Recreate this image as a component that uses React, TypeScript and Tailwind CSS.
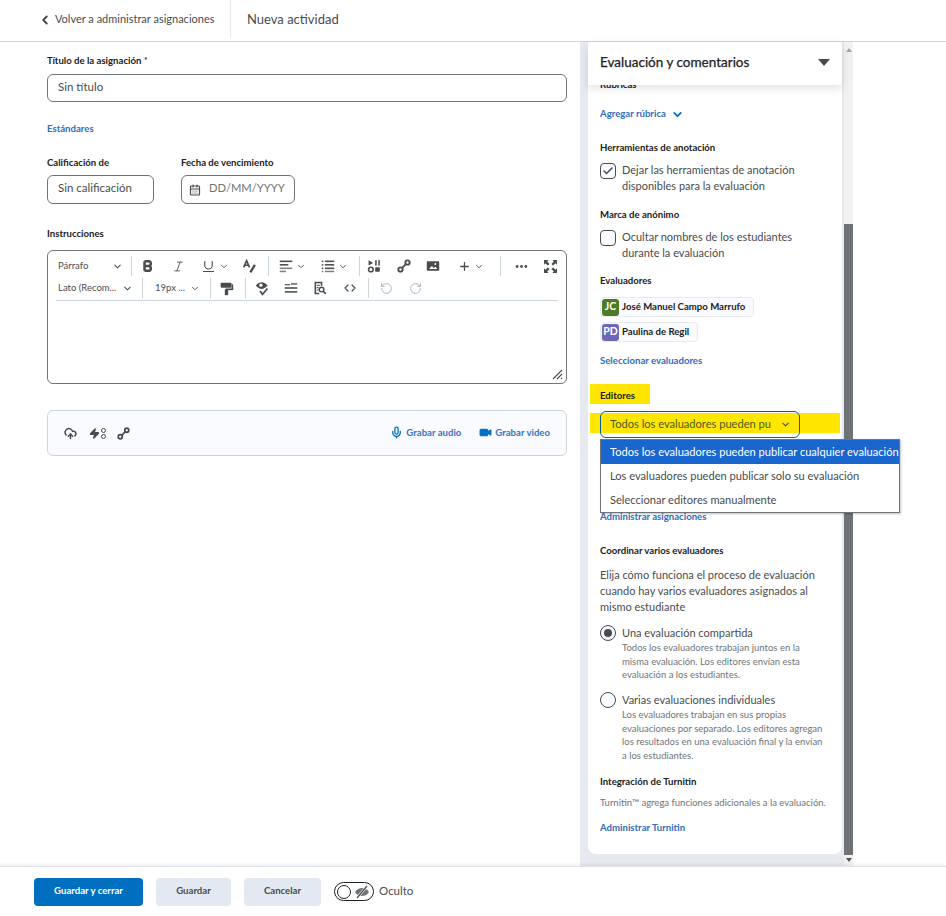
import { ChevronDown, ChevronLeft, Check, CalendarDays, Plus, Ellipsis, RotateCcw, RotateCw, Mic, Video, CloudUpload, Zap, Italic, Underline, Code } from 'lucide-react'

function LinkIcon({ size = 14 }: { size?: number }) {
  return (
    <svg width={size} height={size} viewBox="0 0 18 18" fill="none" stroke="#494c4e" strokeWidth="2.4">
      <circle cx="4.5" cy="13.5" r="2.8" />
      <circle cx="13.5" cy="4.5" r="2.8" />
      <path d="M6.500 11.500l5-5" />
    </svg>
  )
}

function MediaIcon() {
  return (
    <svg width="14" height="14" viewBox="0 0 18 18" fill="#494c4e">
      <path d="M2 1.500l6 3.500-6 3.500z" />
      <rect x="10.500" y="1.500" width="2" height="7" />
      <rect x="14.500" y="1.500" width="2" height="7" />
      <circle cx="5" cy="13.500" r="3" fill="none" stroke="#494c4e" strokeWidth="2" />
      <rect x="10.500" y="10.500" width="6" height="6" rx="1" />
    </svg>
  )
}

function ImageIcon() {
  return (
    <svg width="14" height="14" viewBox="0 0 18 18">
      <rect x="1" y="3" width="16" height="12" rx="1" fill="#494c4e" />
      <path d="M4 13l3.500-4 2.500 2.500 2-1.500 2.500 3z" fill="#fff" />
      <circle cx="12" cy="6.500" r="1.200" fill="#fff" />
    </svg>
  )
}

function AlignIcon() {
  return (
    <svg width="14" height="14" viewBox="0 0 18 18" fill="#494c4e">
      <rect x="1" y="2" width="16" height="2" />
      <rect x="1" y="6.500" width="11" height="2" />
      <rect x="1" y="11" width="16" height="2" opacity="0.7" />
      <rect x="1" y="15" width="8" height="2" opacity="0.7" />
    </svg>
  )
}

function ListIcon() {
  return (
    <svg width="14" height="14" viewBox="0 0 18 18" fill="#494c4e">
      <rect x="1" y="2" width="2" height="2" />
      <rect x="5" y="2" width="12" height="2" />
      <rect x="1" y="6.500" width="2" height="2" />
      <rect x="5" y="6.500" width="12" height="2" />
      <rect x="1" y="11" width="2" height="2" />
      <rect x="5" y="11" width="12" height="2" />
      <rect x="1" y="15" width="2" height="2" opacity="0.7" />
      <rect x="5" y="15" width="12" height="2" opacity="0.7" />
    </svg>
  )
}

function BoldIcon() {
  return (
    <svg width="14" height="14" viewBox="0 0 16 16" fill="none" stroke="#494c4e" strokeWidth="2.800">
      <path d="M4 2.500v11M4 2.500h4.500a2.700 2.700 0 010 5.500H4M4 8h5a2.800 2.800 0 010 5.500H4" />
    </svg>
  )
}

function TextStyleIcon() {
  return (
    <svg width="15" height="15" viewBox="0 0 18 18" fill="none" stroke="#494c4e" strokeWidth="2">
      <path d="M2 10l3.500-8L9 10M3.200 7.500h4.600" />
      <path d="M15.500 7L10 16" strokeWidth="2.800" />
    </svg>
  )
}

function RollerIcon() {
  return (
    <svg width="15" height="15" viewBox="0 0 18 18" fill="#494c4e">
      <rect x="2" y="2" width="13" height="6" rx="1" />
      <rect x="15" y="4" width="2" height="6" />
      <rect x="8" y="9" width="9" height="2" />
      <rect x="7" y="10" width="4" height="7" />
    </svg>
  )
}

function SpellIcon() {
  return (
    <svg width="15" height="15" viewBox="0 0 18 18">
      <path d="M1 5.500C3 2.500 6 1.500 8 1.500s5 1 7 4c-2 3-5 4-7 4s-5-1-7-4z" fill="#494c4e" />
      <circle cx="7" cy="5" r="2" fill="#fff" />
      <path d="M6 12l3 4 6-7" fill="none" stroke="#494c4e" strokeWidth="2" />
    </svg>
  )
}

function WordCountIcon() {
  return (
    <svg width="14" height="14" viewBox="0 0 18 18" fill="#494c4e">
      <rect x="1" y="4" width="7" height="1.500" />
      <rect x="9" y="2.500" width="8" height="2.500" opacity="0.7" />
      <rect x="1" y="8" width="16" height="2" />
      <rect x="1" y="13" width="16" height="2" />
    </svg>
  )
}

function FindIcon() {
  return (
    <svg width="14" height="14" viewBox="0 0 18 18" fill="none" stroke="#494c4e">
      <path d="M8 16H3V2h8v4" strokeWidth="2" />
      <path d="M5 5.500h4M5 8.500h2M5 11.500h2" strokeWidth="1.400" />
      <circle cx="11" cy="11" r="3" strokeWidth="1.800" />
      <path d="M13 13l3.500 3.500" strokeWidth="2" />
    </svg>
  )
}

function FullscreenIcon() {
  return (
    <svg width="13" height="13" viewBox="0 0 14 14" fill="#494c4e">
      <path d="M0 0h5L3.400 1.600 6 4.200 4.200 6 1.600 3.400 0 5zM14 0v5l-1.600-1.600L9.800 6 8 4.200l2.600-2.600L9 0zM0 14V9l1.600 1.600L4.200 8 6 9.800l-2.600 2.600L5 14zM14 14H9l1.600-1.600L8 9.800 9.800 8l2.600 2.600L14 9z" />
    </svg>
  )
}

function EyeOffIcon() {
  return (
    <svg width="16" height="14" viewBox="0 0 16 14" fill="#6e7477">
      <path d="M1 7c2-3 4.500-4 7-4s5 1 7 4c-2 3-4.500 4-7 4s-5-1-7-4z" />
      <path d="M13 1L3 13" stroke="#fff" strokeWidth="2.500" />
      <path d="M13 1L3 13" stroke="#494c4e" strokeWidth="1.200" />
    </svg>
  )
}

function Cell({ className, children }: { className: string; children: React.ReactNode }) {
  return <span className={`flex shrink-0 items-center justify-center ${className}`}>{children}</span>
}

function Sep({ className = '' }: { className?: string }) {
  return <span className={`h-[20px] w-px shrink-0 bg-[#cdd5dc] ${className}`} />
}

function Chev({ className = '' }: { className?: string }) {
  return (
    <Cell className={`w-[10px] ${className}`}>
      <ChevronDown size={11} strokeWidth={2.2} color="#494c4e" />
    </Cell>
  )
}

function Label({ className = '', children }: { className?: string; children: React.ReactNode }) {
  return <div className={`h-4 text-[9.6px] leading-4 font-bold text-[#202122] ${className}`}>{children}</div>
}

function BlueLink({ className = '', children }: { className?: string; children: React.ReactNode }) {
  return <div className={`h-4 text-[9.6px] leading-4 font-bold text-[#2f6dbd] ${className}`}>{children}</div>
}

function Chip({ initials, color, name }: { initials: string; color: string; name: string }) {
  return (
    <div className="flex h-5 w-fit items-center gap-[3px] rounded-[4px] border border-[#e6eaf0] bg-[#f9fbff] pr-2 pl-[1px]">
      <span className={`flex h-[17px] w-[17px] items-center justify-center rounded-[3px] text-[10.5px] font-bold text-white ${color}`}>{initials}</span>
      <span className="text-[9.6px] font-bold text-[#202122]">{name}</span>
    </div>
  )
}

export default function App() {
  return (
    <div className="flex h-[916px] w-[946px] flex-col overflow-hidden bg-white font-['Lato','Noto_Sans',sans-serif] text-[#494c4e]">
      <header className="flex h-[42px] shrink-0 items-center border-b border-[#cdd5dc] pb-[2px]">
        <div className="flex h-full w-[231px] items-center border-r border-[#e6eaf0] pl-[38px]">
          <ChevronLeft size={14} strokeWidth={3.4} color="#494c4e" />
          <span className="ml-[3px] text-[11px]">Volver a administrar asignaciones</span>
        </div>
        <span className="ml-[16px] text-[13px]">Nueva actividad</span>
      </header>

      <main className="flex min-h-0 flex-1">
        <section className="w-[580px] shrink-0 pt-[11px] pl-[47px]">
          <Label>Título de la asignación <span className="font-normal">*</span></Label>
          <div className="mt-[5px] flex h-[28px] w-[520px] items-center rounded-md border border-[#6e7477] pb-[2px] pl-[10px] text-[11.5px]">Sin título</div>
          <BlueLink className="mt-[19px]">Estándares</BlueLink>

          <div className="mt-[18px] flex gap-[27px]">
            <div>
              <Label>Calificación de</Label>
              <div className="mt-1 flex h-[29px] w-[107px] items-center rounded-md border border-[#6e7477] pb-[3px] pl-[10px] text-[11.5px]">Sin calificación</div>
            </div>
            <div>
              <Label>Fecha de vencimiento</Label>
              <div className="mt-1 flex h-[29px] w-[114px] items-center rounded-md border border-[#6e7477] pl-[7px] text-[11.2px] text-[#6e7477]">
                <CalendarDays size={12} strokeWidth={2.4} color="#494c4e" />
                <span className="mb-[3px] ml-[8px]">DD/MM/YYYY</span>
              </div>
            </div>
          </div>

          <Label className="mt-[22px]">Instrucciones</Label>
          <div className="relative mt-2 h-[134px] w-[520px] rounded-md border border-[#6e7477] px-2 pt-1">
            <div className="flex h-[22px] items-center">
              <div className="flex w-[76px] items-center justify-between pr-[8px] pl-[2px] text-[9.5px]">
                <span>Párrafo</span>
                <ChevronDown size={11} strokeWidth={2.2} color="#494c4e" />
              </div>
              <Sep />
              <Cell className="w-[32px]"><BoldIcon /></Cell>
              <Cell className="w-[28px]"><Italic size={13} strokeWidth={1.6} color="#494c4e" /></Cell>
              <Cell className="ml-[5px] w-[22px]"><Underline size={15} strokeWidth={1.8} color="#494c4e" /></Cell>
              <Chev />
              <Cell className="ml-[8px] w-[24px]"><TextStyleIcon /></Cell>
              <Sep className="ml-[7px]" />
              <Cell className="ml-[8px] w-[18px]"><AlignIcon /></Cell>
              <Chev className="ml-px" />
              <Cell className="ml-[13px] w-[18px]"><ListIcon /></Cell>
              <Chev className="ml-px" />
              <Sep className="ml-[11px]" />
              <Cell className="ml-[5px] w-[18px]"><MediaIcon /></Cell>
              <Cell className="ml-[12px] w-[18px]"><LinkIcon /></Cell>
              <Cell className="ml-[11px] w-[18px]"><ImageIcon /></Cell>
              <Cell className="ml-[15px] w-[14px]"><Plus size={13} strokeWidth={2.4} color="#494c4e" /></Cell>
              <Chev className="ml-[3px]" />
              <Sep className="ml-[16px]" />
              <Cell className="ml-[11px] w-[18px]"><Ellipsis size={15} strokeWidth={2.6} color="#494c4e" /></Cell>
              <Cell className="ml-[12px] w-[16px]"><FullscreenIcon /></Cell>
            </div>
            <div className="flex h-[22px] items-center">
              <div className="flex w-[86px] items-center justify-between pr-[9px] pl-[2px] text-[9.5px]">
                <span>Lato (Recom...</span>
                <ChevronDown size={11} strokeWidth={2.2} color="#494c4e" />
              </div>
              <Sep />
              <span className="ml-[12px] w-[30px] shrink-0 text-[9.5px] whitespace-nowrap">19px ...</span>
              <Chev className="ml-[5px]" />
              <Sep className="ml-[10px]" />
              <Cell className="ml-[6px] w-[18px]"><RollerIcon /></Cell>
              <Sep className="ml-[10px]" />
              <Cell className="ml-[7px] w-[18px]"><SpellIcon /></Cell>
              <Cell className="ml-[11px] w-[18px]"><WordCountIcon /></Cell>
              <Cell className="ml-[11px] w-[18px]"><FindIcon /></Cell>
              <Cell className="ml-[13px] w-[16px]"><Code size={12} strokeWidth={2.4} color="#494c4e" /></Cell>
              <Sep className="ml-[10px]" />
              <Cell className="ml-[9px] w-[16px]"><RotateCcw size={13} strokeWidth={1.8} color="#aeb4b9" /></Cell>
              <Cell className="ml-[13px] w-[16px]"><RotateCw size={13} strokeWidth={1.8} color="#aeb4b9" /></Cell>
            </div>
            <div className="mt-px h-px bg-[#cdd5dc]" />
            {/* resize handle */}
            <svg className="absolute right-[3px] bottom-[3px]" width="11" height="11" viewBox="0 0 11 11" stroke="#494c4e" strokeWidth="1.1">
              <path d="M1 10L10 1M5 10l5-5M9 10l1-1" />
            </svg>
          </div>

          <div className="mt-[26px] flex h-[46px] w-[520px] items-center rounded-md border border-[#cdd5dc] bg-[#f9fbff] pr-[16px] pl-[16px]">
            <CloudUpload size={13} strokeWidth={2.8} color="#494c4e" />
            <span className="ml-[12px] flex items-center gap-px">
              <Zap size={11} strokeWidth={2.4} color="#494c4e" fill="#494c4e" />
              <span className="flex flex-col gap-px">
                <span className="h-[5px] w-[5px] rounded-full border-[1.5px] border-[#494c4e]" />
                <span className="h-[5px] w-[5px] rounded-full border-[1.5px] border-[#494c4e]" />
              </span>
            </span>
            <span className="ml-[11px] flex"><LinkIcon size={13} /></span>
            <span className="ml-auto flex items-center text-[9.6px] font-bold text-[#3a72bd]">
              <Mic size={13} strokeWidth={2.4} color="#006fbf" />
              <span className="ml-[3px]">Grabar audio</span>
              <Video size={13} strokeWidth={2} color="#006fbf" fill="#006fbf" className="ml-[18px]" />
              <span className="ml-[3px]">Grabar video</span>
            </span>
          </div>
        </section>

        <aside className="flex h-full w-[273px] shrink-0 bg-[#e6eaf0]">
          <div className="ml-[8px] h-[812px] w-[254px] rounded-b-lg bg-white">
            <div className="relative z-10 flex h-[43px] items-center justify-between rounded-t-md bg-white px-[12px] pb-[3px] shadow-[0_3px_8px_rgba(0,0,0,0.12)]">
              <span className="text-[13.5px] text-[#202122] [-webkit-text-stroke:0.25px_#202122]">Evaluación y comentarios</span>
              <span className="h-0 w-0 border-x-[6.5px] border-t-[7px] border-x-transparent border-t-[#494c4e]" />
            </div>
            <div className="-mt-[8px] px-[12px]">
              <Label>Rúbricas</Label>
              <BlueLink className="mt-[13px] flex items-center gap-[5px]">
                Agregar rúbrica
                <ChevronDown size={13} strokeWidth={3.4} color="#006fbf" />
              </BlueLink>

              <Label className="mt-[18px]">Herramientas de anotación</Label>
              <div className="mt-[6px] flex gap-[6px]">
                <span className="mt-px flex h-4 w-4 shrink-0 items-center justify-center rounded-[4px] border border-[#494c4e] bg-[#f9fbff]">
                  <Check size={12} strokeWidth={3} color="#494c4e" />
                </span>
                <span className="text-[11px] leading-4">Dejar las herramientas de anotación disponibles para la evaluación</span>
              </div>

              <Label className="mt-[13px]">Marca de anónimo</Label>
              <div className="mt-[6px] flex gap-[6px]">
                <span className="mt-px h-4 w-4 shrink-0 rounded-[4px] border border-[#494c4e] bg-[#f9fbff]" />
                <span className="w-[190px] text-[11px] leading-4">Ocultar nombres de los estudiantes durante la evaluación</span>
              </div>

              <Label className="mt-[12px]">Evaluadores</Label>
              <div className="mt-[8px] flex flex-col gap-[5px]">
                <Chip initials="JC" color="bg-[#4f7a28]" name="José Manuel Campo Marrufo" />
                <Chip initials="PD" color="bg-[#6d67b8]" name="Paulina de Regil" />
              </div>
              <BlueLink className="mt-[11px]">Seleccionar evaluadores</BlueLink>

              <div className="mt-[15px] -ml-[10px] h-5 w-[60px] bg-[#ffe600] pl-[10px] text-[9.6px] leading-[24px] font-bold text-[#202122]">Editores</div>

              <div className="relative mt-[7px] h-[27px]">
                <div className="absolute top-[2px] -right-[10px] -left-[10px] h-5 bg-[#ffe600]" />
                <div className="absolute top-0 left-0 flex h-[27px] w-[200px] items-center rounded-md border border-[#00609f] pl-[9px] text-[11.1px] text-[#4a5a20]">
                  <span className="w-[161px] overflow-hidden whitespace-nowrap">Todos los evaluadores pueden publicar cualquier evaluación</span>
                  <ChevronDown size={11} strokeWidth={2.4} color="#494c4e" className="ml-[9px]" />
                </div>
                <div className="absolute top-[28px] left-0 z-20 w-[300px] border border-[#6e7477] bg-white text-[11.1px] shadow-[1px_1px_2px_rgba(0,0,0,0.25)]">
                  <div className="flex h-6 items-center bg-[#1a66cf] pl-[9px] whitespace-nowrap text-white">Todos los evaluadores pueden publicar cualquier evaluación</div>
                  <div className="flex h-6 items-center pl-[9px]">Los evaluadores pueden publicar solo su evaluación</div>
                  <div className="flex h-6 items-center pl-[9px]">Seleccionar editores manualmente</div>
                </div>
              </div>

              <BlueLink className="mt-[71px]">Administrar asignaciones</BlueLink>

              <Label className="mt-[18px]">Coordinar varios evaluadores</Label>
              <p className="mt-[8px] text-[11px] leading-4">Elija cómo funciona el proceso de evaluación cuando hay varios evaluadores asignados al mismo estudiante</p>

              <div className="mt-[10px] flex gap-[6px]">
                <span className="flex h-4 w-4 shrink-0 items-center justify-center rounded-full border border-[#494c4e] bg-[#f9fbff]">
                  <span className="h-2 w-2 rounded-full bg-[#494c4e]" />
                </span>
                <div>
                  <div className="text-[11px] leading-4">Una evaluación compartida</div>
                  <p className="w-[198px] text-[9.5px] leading-[13.7px] text-[#6e7477]">Todos los evaluadores trabajan juntos en la misma evaluación. Los editores envían esta evaluación a los estudiantes.</p>
                </div>
              </div>

              <div className="mt-[10px] flex gap-[6px]">
                <span className="h-4 w-4 shrink-0 rounded-full border border-[#494c4e] bg-[#f9fbff]" />
                <div>
                  <div className="text-[11px] leading-4">Varias evaluaciones individuales</div>
                  <p className="w-[204px] text-[9.5px] leading-[13.5px] text-[#6e7477]">Los evaluadores trabajan en sus propias evaluaciones por separado. Los editores agregan los resultados en una evaluación final y la envían a los estudiantes.</p>
                </div>
              </div>

              <Label className="mt-[12px]">Integración de Turnitin</Label>
              <p className="mt-[5px] h-4 text-[9.5px] leading-4 whitespace-nowrap text-[#6e7477]">Turnitin™ agrega funciones adicionales a la evaluación.</p>
              <BlueLink className="mt-[9px]">Administrar Turnitin</BlueLink>
            </div>
          </div>
          <div className="ml-[2px] flex h-full w-[9px] flex-col items-center bg-[#f1f1f1]">
            <span className="mt-[6px] h-0 w-0 border-x-[3px] border-b-[4px] border-x-transparent border-b-[#a3a3a3]" />
            <div className="mt-[172px] h-[631px] w-full bg-[#6e7378]" />
            <span className="mt-[3px] h-0 w-0 border-x-[3px] border-t-[4px] border-x-transparent border-t-[#505050]" />
          </div>
        </aside>
      </main>

      <footer className="flex h-[50px] shrink-0 items-center border-t border-[#dfe3e8] pl-[34px] shadow-[0_-2px_3px_rgba(0,0,0,0.06)]">
        <button className="h-[28px] w-[109px] rounded-[4px] bg-[#006fbf] text-[9.6px] font-bold text-white">Guardar y cerrar</button>
        <button className="ml-[13px] h-[28px] w-[75px] rounded-[4px] bg-[#e3e9f1] text-[9.6px] font-bold text-[#494c4e]">Guardar</button>
        <button className="ml-[13px] h-[28px] w-[77px] rounded-[4px] bg-[#e3e9f1] text-[9.6px] font-bold text-[#494c4e]">Cancelar</button>
        <span className="ml-[13px] flex h-[19px] w-[40px] items-center justify-between rounded-full border border-[#202122] pr-[3px] pl-[2px]">
          <span className="h-[14px] w-[14px] rounded-full border border-[#202122] bg-white" />
          <EyeOffIcon />
        </span>
        <span className="mb-px ml-[5px] text-[11.5px]">Oculto</span>
      </footer>
    </div>
  )
}
